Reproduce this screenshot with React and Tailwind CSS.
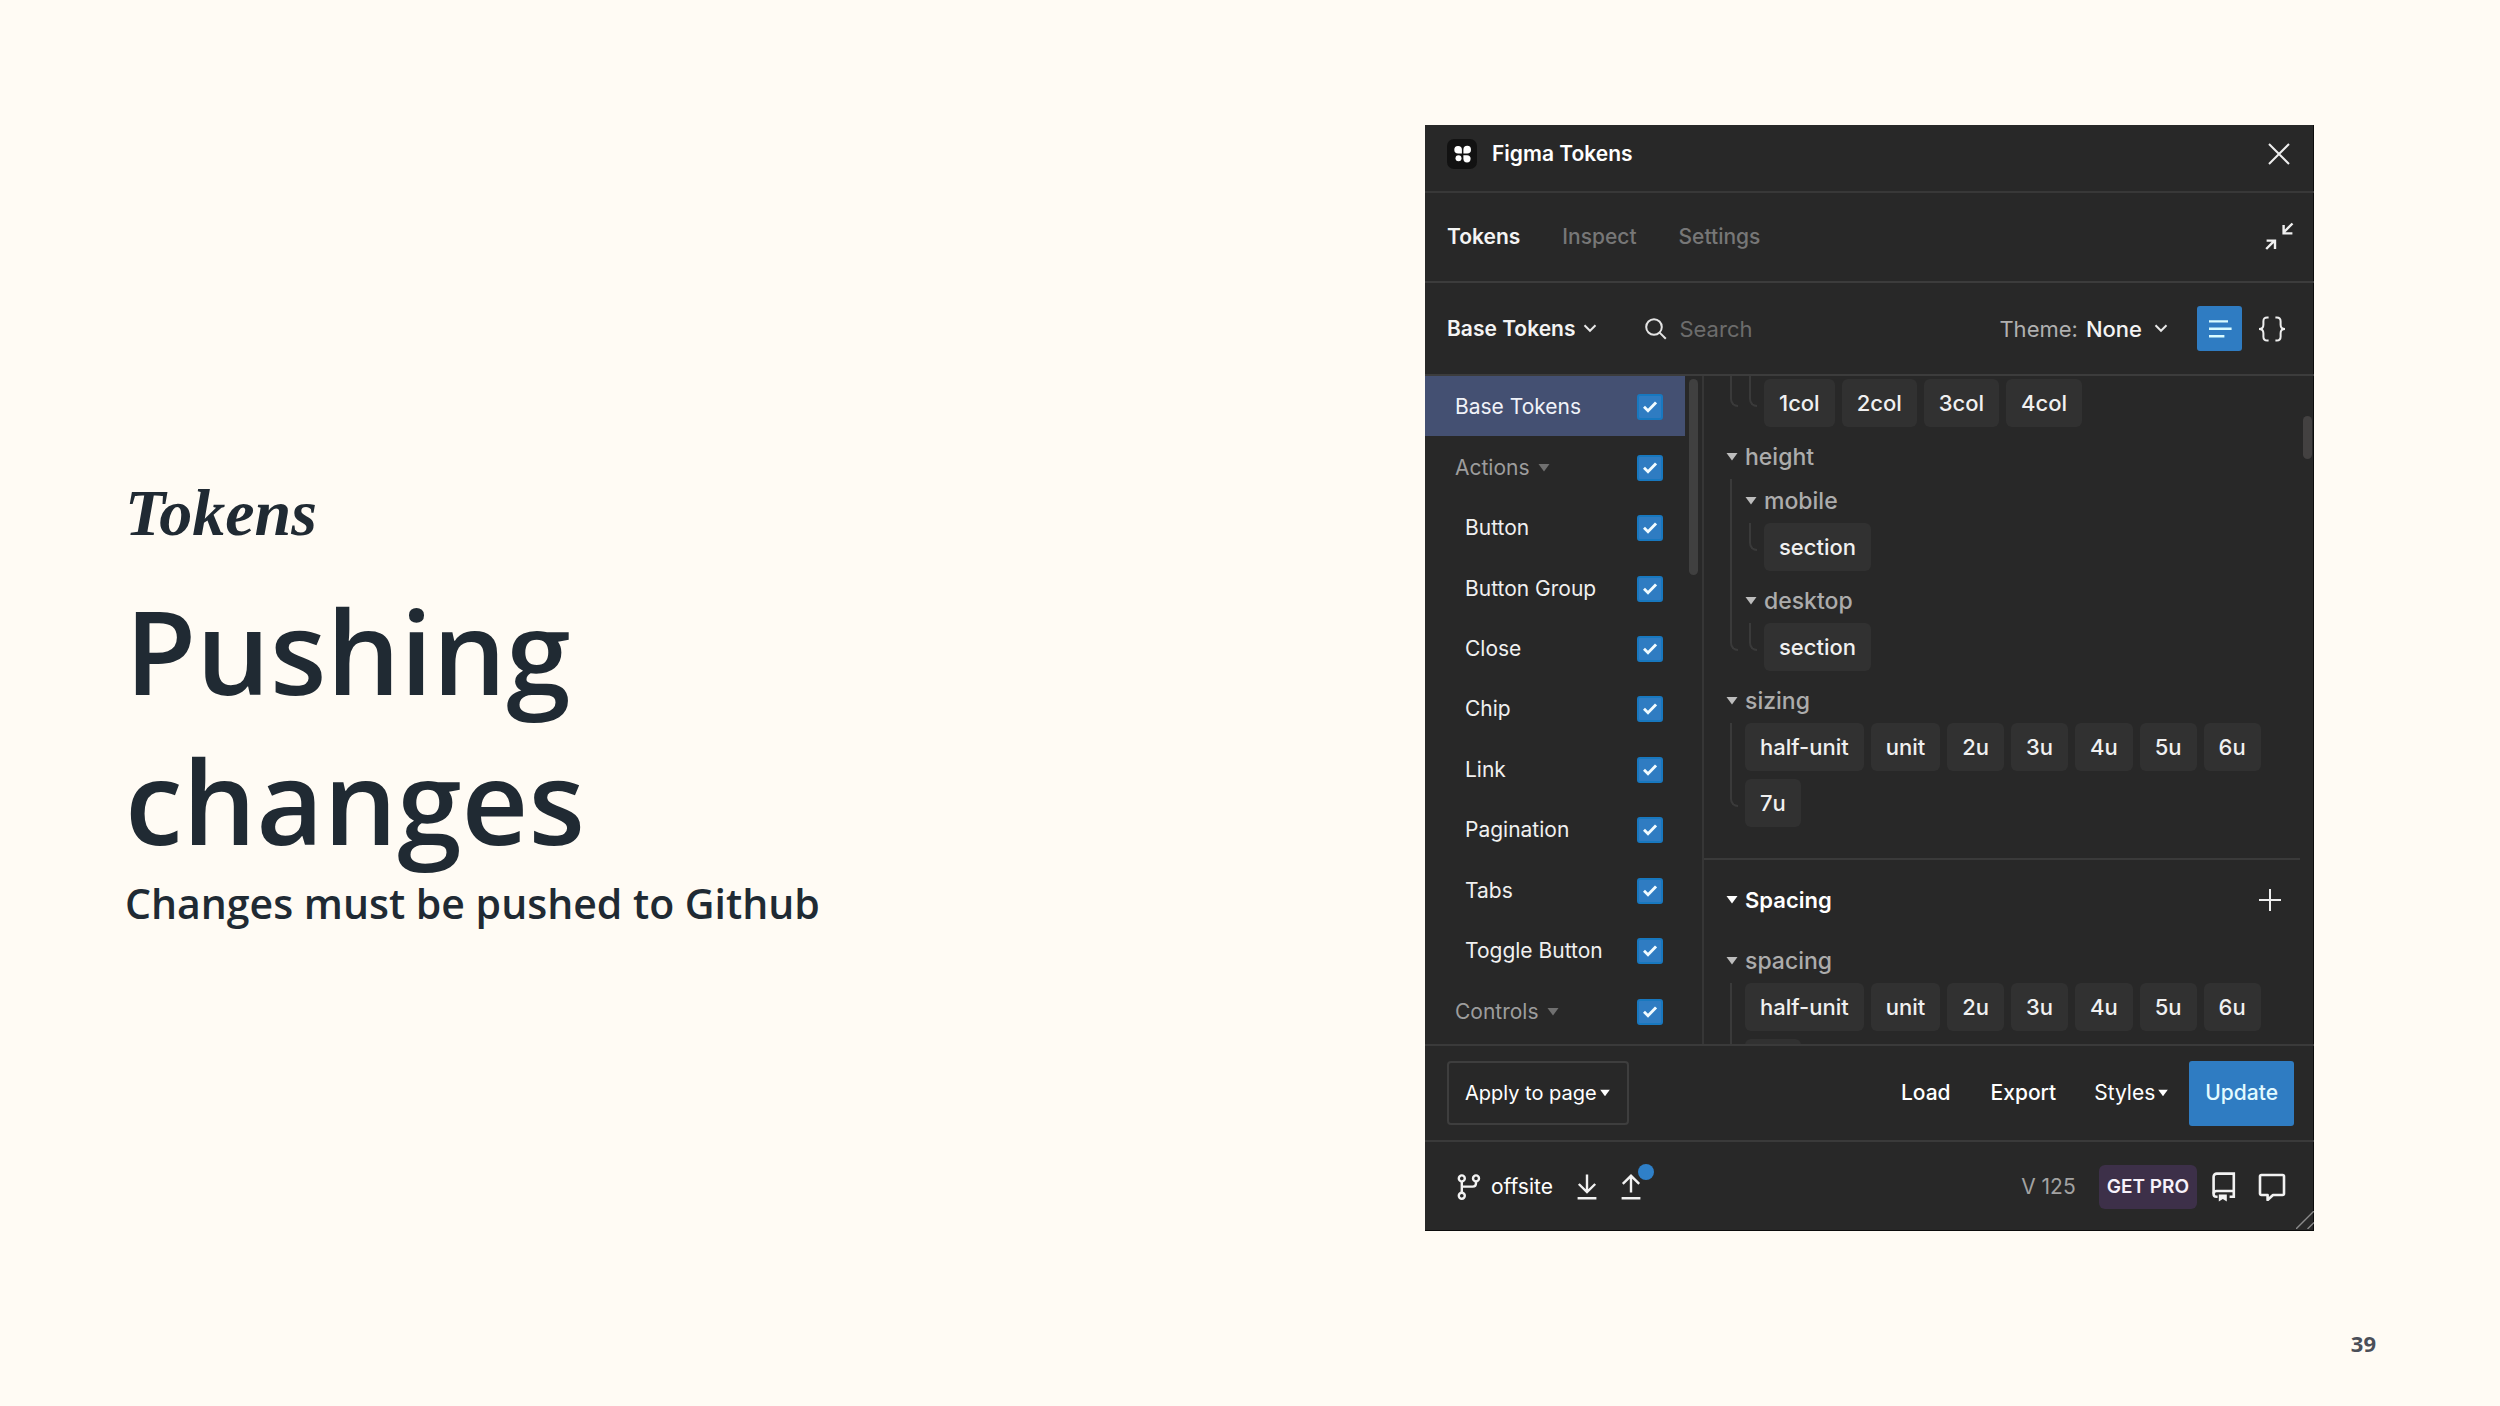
import React from "react";

const tokenSets = [
  { name: "Base Tokens", kind: "selected" },
  { name: "Actions", kind: "folder" },
  { name: "Button", kind: "child" },
  { name: "Button Group", kind: "child" },
  { name: "Close", kind: "child" },
  { name: "Chip", kind: "child" },
  { name: "Link", kind: "child" },
  { name: "Pagination", kind: "child" },
  { name: "Tabs", kind: "child" },
  { name: "Toggle Button", kind: "child" },
  { name: "Controls", kind: "folder" },
];

const units = ["half-unit", "unit", "2u", "3u", "4u", "5u", "6u", "7u"];

function Triangle({ className = "" }) {
  return (
    <svg aria-hidden="true" viewBox="0 0 12 8" className={`h-2 w-3 shrink-0 ${className}`} fill="currentColor">
      <path d="M0.5 0h11L6 7.5z" />
    </svg>
  );
}

function Chevron() {
  return (
    <svg aria-hidden="true" viewBox="0 0 14 9" className="pointer-events-none h-[9px] w-3.5 shrink-0" fill="none" stroke="#e8e8e8" strokeWidth="2">
      <path d="M1.5 1.2L7 6.8l5.5-5.6" />
    </svg>
  );
}

function CheckBox({ id }) {
  return (
    <span className="grid size-[26px] shrink-0 place-items-center">
      <input
        id={id}
        type="checkbox"
        defaultChecked
        className="peer col-start-1 row-start-1 size-[26px] appearance-none rounded-[3px] border-2 border-[#1878bf] bg-[#2f7cc2]"
      />
      <svg
        aria-hidden="true"
        viewBox="0 0 14 12"
        className="pointer-events-none col-start-1 row-start-1 hidden h-3 w-3.5 peer-checked:block"
        fill="none"
        stroke="#f1fbff"
        strokeWidth="2.8"
      >
        <path d="M1 5.8l4 4L13 1.4" />
      </svg>
    </span>
  );
}

function SetRow({ name, kind }) {
  const id = "set-" + name.toLowerCase().replace(" ", "-");
  const look = {
    selected: "bg-[#445072] pl-[30px] text-[#f0f2f8]",
    folder: "pl-[30px] text-[#9d9d9d]",
    child: "pl-10 text-[#f0f0f0]",
  }[kind];
  return (
    <li className={`flex flex-1 items-center justify-between pt-0.5 pr-[22px] ${look}`}>
      <label htmlFor={id} className="flex items-center gap-2">
        {name}
        {kind === "folder" && <Triangle className="text-[#707070]" />}
      </label>
      <CheckBox id={id} />
    </li>
  );
}

function Chips({ names }) {
  return (
    <div className="flex flex-wrap gap-x-[7px] gap-y-2 pb-2">
      {names.map((n) => (
        <button key={n} type="button" className="h-12 rounded-md bg-[#313131] px-[15px] text-[22px] font-medium text-[#f0f0f0]">
          {n}
        </button>
      ))}
    </div>
  );
}

function Branch({ children }) {
  return (
    <div className="ml-1 flex gap-[7px]">
      <div className="mb-7 w-2 shrink-0 rounded-bl-lg border-b-2 border-l-2 border-[#3a3a3a]" />
      <div className="min-w-0 flex-1">{children}</div>
    </div>
  );
}

function Group({ name, children }) {
  return (
    <div>
      <button type="button" className="flex h-11 items-center gap-[7px] text-[23px] font-medium text-[#acacac]">
        <Triangle className="text-[#bdbdbd]" />
        {name}
      </button>
      <Branch>{children}</Branch>
    </div>
  );
}

function Panel() {
  return (
    <section
      aria-label="Figma Tokens"
      className="flex flex-col overflow-hidden bg-[#282828] font-[Inter,sans-serif] text-[21px] leading-7 text-white shadow-[inset_-1px_-1px_0_#0c0c0c]"
    >
      <header className="flex h-[68px] items-center justify-between border-b-2 border-[#383838] pr-6 pb-2 pl-[22px]">
        <div className="flex items-center gap-[15px]">
          <svg aria-hidden="true" viewBox="0 0 30 30" className="size-[30px]">
            <rect width="30" height="30" rx="7" fill="#121212" />
            <g fill="#fff">
              <path d="M7.3 10.8a3.8 3.8 0 0 1 7.6-.2v4h-3.8a3.8 3.8 0 0 1-3.8-3.8z" />
              <path d="M16.4 14.4v-3.9a3.8 3.8 0 1 1 3.8 3.9z" />
              <circle cx="11.5" cy="19.3" r="3" />
              <path d="M16.4 16.2h3.6a3.6 3.6 0 1 1-3.6 3.6z" />
            </g>
          </svg>
          <h2 className="font-semibold">Figma Tokens</h2>
        </div>
        <button type="button" aria-label="Close">
          <svg viewBox="0 0 22 22" className="size-[22px]" stroke="#eee" strokeWidth="2">
            <path d="M1 1l20 20M21 1L1 21" />
          </svg>
        </button>
      </header>

      <nav className="flex h-[90px] items-center gap-[42px] border-b-2 border-[#3c3c3c] pr-5 pl-[22px] font-medium">
        <button type="button" className="font-semibold text-[#f4f4f4]">Tokens</button>
        <button type="button" className="text-[#777]">Inspect</button>
        <button type="button" className="text-[#777]">Settings</button>
        <button type="button" aria-label="Minimize plugin" className="ml-auto">
          <svg viewBox="0 0 30 30" className="size-[30px]" fill="none" stroke="#f0f0f0" strokeWidth="2.4">
            <path d="M28.5 1.5L20 10M19.6 3v8.4h8.8M2.2 27L10 19.2M2.6 18.6h8.4V27" />
          </svg>
        </button>
      </nav>

      <div className="flex h-[93px] items-center border-b-2 border-[#3c3c3c] pr-7 pl-[22px]">
        <div className="flex items-center">
          <select aria-label="Token set" className="[field-sizing:content] appearance-none bg-[#282828] pr-2 font-semibold text-[#f4f4f4]">
            <option>Base Tokens</option>
          </select>
          <Chevron />
        </div>
        <label className="ml-12 flex min-w-0 flex-1 items-center gap-3">
          <svg aria-hidden="true" viewBox="0 0 22 22" className="size-[22px] shrink-0" fill="none" stroke="#e4e4e4" strokeWidth="2">
            <circle cx="9" cy="9" r="7.8" />
            <path d="M14.6 14.6l6.2 6.2" />
          </svg>
          <input
            type="text"
            aria-label="Search"
            placeholder="Search"
            className="w-full min-w-0 bg-transparent text-[22px] outline-none placeholder:text-[#6c6c6c]"
          />
        </label>
        <div className="flex items-center text-[22px]">
          <label htmlFor="theme" className="pr-2 text-[#b0b0b0]">Theme:</label>
          <select id="theme" className="[field-sizing:content] appearance-none bg-[#282828] pr-3 font-medium text-[#f4f4f4]">
            <option>None</option>
          </select>
          <Chevron />
        </div>
        <button type="button" aria-label="List view" className="ml-[29px] grid size-[45px] place-items-center rounded-[3px] bg-[#2f7cc2]">
          <svg viewBox="0 0 24 20" className="h-5 w-6" stroke="#d8fbff" strokeWidth="2.4">
            <path d="M1 2.4h19M1 9.8h22.6M1 17.2h15.4" />
          </svg>
        </button>
        <button type="button" aria-label="JSON view" className="ml-4">
          <svg viewBox="0 0 28 26" className="h-[26px] w-7" fill="none" stroke="#eee" strokeWidth="2">
            <path d="M10.6 1.4H9.2C6.6 1.4 5.4 2.8 5.4 5.2v3.6c0 2.6-1.4 4.2-4.4 4.2 3 0 4.4 1.6 4.4 4.2v3.6c0 2.4 1.2 3.8 3.8 3.8h1.4M17.4 1.4h1.4c2.6 0 3.8 1.4 3.8 3.8v3.6c0 2.6 1.4 4.2 4.4 4.2-3 0-4.4 1.6-4.4 4.2v3.6c0 2.4-1.2 3.8-3.8 3.8h-1.4" />
          </svg>
        </button>
      </div>

      <div className="flex h-[668px]">
        <div className="flex w-[279px] shrink-0 border-r-2 border-[#363636]">
          <ul className="flex flex-1 flex-col pb-[3px]">
            {tokenSets.map((s) => (
              <SetRow key={s.name} {...s} />
            ))}
          </ul>
          <div className="flex w-[17px] justify-center pt-[3px]">
            <div className="h-[196px] w-[9px] rounded-full bg-[#404040]" />
          </div>
        </div>

        <div className="flex-1 overflow-hidden">
          <div className="mr-3.5 border-b-2 border-[#3a3a3a] pb-[23px] pl-[22px]">
            <Branch>
              <Branch>
                <div className="pt-[3px]">
                  <Chips names={["1col", "2col", "3col", "4col"]} />
                </div>
              </Branch>
            </Branch>
            <Group name="height">
              <Group name="mobile">
                <Chips names={["section"]} />
              </Group>
              <Group name="desktop">
                <Chips names={["section"]} />
              </Group>
            </Group>
            <Group name="sizing">
              <Chips names={units} />
            </Group>
          </div>
          <div className="mr-3.5 pl-[22px]">
            <div className="flex h-[79px] items-center justify-between pr-[18px]">
              <button type="button" className="flex items-center gap-[7px] text-[22px] font-semibold">
                <Triangle />
                Spacing
              </button>
              <button type="button" aria-label="Add spacing token">
                <svg viewBox="0 0 24 24" className="size-6" stroke="#eee" strokeWidth="2">
                  <path d="M12 1v22M1 12h22" />
                </svg>
              </button>
            </div>
            <Group name="spacing">
              <Chips names={units} />
            </Group>
          </div>
        </div>
        <div className="-ml-3.5 w-3.5 shrink-0 pt-10 pl-[3px]">
          <div className="h-[43px] w-[9px] rounded-full bg-[#434141]" />
        </div>
      </div>

      <div className="flex h-[98px] items-center justify-between border-y-2 border-[#3a3a3a] pr-5 pl-[22px]">
        <button type="button" className="flex h-16 items-center gap-0.5 rounded-[4px] border-2 border-[#3e3e3e] px-4 text-xl">
          Apply to page
          <Triangle className="scale-90" />
        </button>
        <div className="flex items-center">
          <button type="button" className="mr-10 font-medium">Load</button>
          <button type="button" className="mr-[38px] font-medium">Export</button>
          <button type="button" className="mr-5 flex items-center gap-0.5">
            Styles
            <Triangle className="scale-90" />
          </button>
          <button type="button" className="h-[65px] rounded-[3px] bg-[#2f7cc2] px-4 font-medium text-[#e2faff]">Update</button>
        </div>
      </div>

      <footer className="relative flex h-[89px] items-center justify-between pr-7 pl-8">
        <div className="flex items-center">
          <button type="button" className="flex items-center gap-2.5">
            <svg aria-hidden="true" viewBox="0 0 24 26" className="h-[26px] w-6" fill="none" stroke="#f2f2f2" strokeWidth="2.4">
              <circle cx="4.8" cy="4.4" r="3" />
              <circle cx="19" cy="4.4" r="3" />
              <circle cx="4.8" cy="21.8" r="3" />
              <path d="M4.8 7.4v11.4M19 7.4v1.8c0 2.2-1.2 3.4-3.4 3.4H4.8" />
            </svg>
            offsite
          </button>
          <button type="button" aria-label="Pull from remote" className="ml-6">
            <svg viewBox="0 0 20 26" className="h-[26px] w-5" fill="none" stroke="#f2f2f2" strokeWidth="2.4">
              <path d="M10 0.5v17M1.8 10l8.2 8 8.2-8M0.6 24.2h18.8" />
            </svg>
          </button>
          <button type="button" aria-label="Push to remote" className="relative ml-6">
            <svg viewBox="0 0 20 26" className="h-[26px] w-5" fill="none" stroke="#f2f2f2" strokeWidth="2.4">
              <path d="M10 18.5V2M1.8 9.8L10 1.8l8.2 8M0.6 24.2h18.8" />
            </svg>
            <span className="absolute -top-2.5 left-[17px] size-4 rounded-full bg-[#2f80c8]" />
          </button>
        </div>
        <div className="flex items-center">
          <span className="mr-[23px] text-[#a2a2a2]">V 125</span>
          <button type="button" className="mr-[15px] h-11 rounded-md bg-[#3d3049] px-2 text-[19px] font-semibold text-[#f7f2fa]">GET PRO</button>
          <button type="button" aria-label="Documentation" className="mr-[22px]">
            <svg viewBox="0 0 24 30" className="h-[30px] w-6" fill="none" stroke="#f2f2f2" strokeWidth="2.6">
              <path d="M5.6 24.8H4.4A2.8 2.8 0 0 1 1.6 22V4.8A3.2 3.2 0 0 1 4.8 1.6h17v23.2h-4.2" />
              <path d="M1.8 21.4c0-1.6 1.2-2.4 2.8-2.4h17" />
              <path d="M6.8 22.4h8v7.2l-4-2.6-4 2.6z" fill="#f2f2f2" stroke="none" />
            </svg>
          </button>
          <button type="button" aria-label="Feedback">
            <svg viewBox="0 0 28 28" className="size-7" fill="none" stroke="#f2f2f2" strokeWidth="2.6" strokeLinejoin="round">
              <path d="M3.4 2h21.2c.9 0 1.4.5 1.4 1.4v17.2c0 .9-.5 1.4-1.4 1.4H15l-5.4 5V22H3.4c-.9 0-1.4-.5-1.4-1.4V3.4c0-.9.5-1.4 1.4-1.4z" />
            </svg>
          </button>
        </div>
        <svg aria-hidden="true" viewBox="0 0 18 18" className="absolute right-0 bottom-0.5 size-[18px]" stroke="#8a8a8a" strokeWidth="1.4">
          <path d="M0 18L18 0M11.5 18L18 11.5" />
        </svg>
      </footer>
    </section>
  );
}

export default function App() {
  return (
    <div className="flex min-h-screen flex-col bg-[#fffbf4] text-[#202a33]">
      <main className="grid grid-cols-[1425fr_889fr_186fr] pt-[125px]">
        <div className="pt-[344px] pl-[125px] font-['Open_Sans',sans-serif] font-semibold">
          <p className="font-['Liberation_Serif',serif] text-[66px] leading-[88px] font-bold italic">Tokens</p>
          <h1 className="mt-[18px] max-w-[600px] text-[116px] leading-[150px]">Pushing changes</h1>
          <p className="text-[41px] leading-[56px]">Changes must be pushed to Github</p>
        </div>
        <Panel />
      </main>
      <footer className="mt-auto pr-[124px] pb-12 text-right font-['Open_Sans',sans-serif] text-[22px] leading-[30px] font-bold text-[#4b4f58]">
        39
      </footer>
    </div>
  );
}
